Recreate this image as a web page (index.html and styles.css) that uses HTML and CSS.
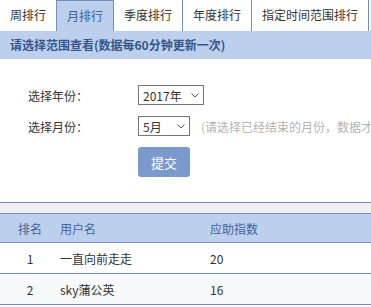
FILE: index.html
```html
<!DOCTYPE html>
<html>
<head>
    <title>排行</title>
    <link rel="stylesheet" href="styles.css">
</head>
<body>
    <ul class="tabs">
        <li>周排行</li>
        <li class="active">月排行</li>
        <li>季度排行</li>
        <li>年度排行</li>
        <li>指定时间范围排行</li>
    </ul>
    <div class="tip">请选择范围查看(数据每60分钟更新一次)</div>

    <form class="rangeform">
        <div class="row">
            <label>选择年份：</label>
            <span class="selbox sel-year">
                <select>
                    <option>2017年</option>
                    <option>2016年</option>
                </select>
                <svg class="arrow" width="8" height="5" viewBox="0 0 8 5"><path d="M0.5 0.5 L4 4 L7.5 0.5" fill="none" stroke="#555" stroke-width="1"/></svg>
            </span>
        </div>
        <div class="row">
            <label>选择月份：</label>
            <span class="selbox sel-month">
                <select>
                    <option>5月</option>
                    <option>4月</option>
                </select>
                <svg class="arrow" width="8" height="5" viewBox="0 0 8 5"><path d="M0.5 0.5 L4 4 L7.5 0.5" fill="none" stroke="#555" stroke-width="1"/></svg>
            </span>
            <span class="hint">(请选择已经结束的月份，数据才会完整)</span>
        </div>
        <div class="row">
            <label></label>
            <button type="button" class="btn">提交</button>
        </div>
    </form>

    <div class="toolbar"></div>
    <table class="rank">
        <tr>
            <th class="c1">排名</th>
            <th class="c2">用户名</th>
            <th>应助指数</th>
        </tr>
        <tr>
            <td class="c1">1</td>
            <td class="c2">一直向前走走</td>
            <td>20</td>
        </tr>
        <tr class="alt">
            <td class="c1">2</td>
            <td class="c2">sky蒲公英</td>
            <td>16</td>
        </tr>
    </table>
</body>
</html>
```

FILE: styles.css
```css
body{
    margin: 0;
    font-family: "Microsoft YaHei", "Noto Sans CJK SC", sans-serif;
    font-size: 12px;
    color: #333;
    overflow: hidden;
}
.tabs{
    display: flex;
    list-style: none;
    margin: 0;
    padding: 0;
    height: 31px;
}
.tabs li{
    flex-shrink: 0;
    height: 31px;
    line-height: 30px;
    padding: 0 10px;
    border-right: 1px solid #6f8fbd;
    box-sizing: border-box;
    white-space: nowrap;
}
.tabs li.active{
    background: #bccfec;
    border-top: 1px solid #6f8fbd;
    color: #3f5f94;
}
.tip{
    background: #bccfec;
    height: 28px;
    line-height: 28px;
    padding-left: 10px;
    font-weight: bold;
    color: #36558a;
}
.rangeform{
    padding: 26px 0 25px 28px;
}
.row{
    display: flex;
    align-items: center;
    height: 20px;
    margin-bottom: 11px;
    white-space: nowrap;
}
.row:last-child{
    height: 30px;
    margin-bottom: 0;
}
.row label{
    width: 110px;
    flex-shrink: 0;
}
.selbox{
    position: relative;
    flex-shrink: 0;
    height: 20px;
}
.selbox select{
    -webkit-appearance: none;
    appearance: none;
    width: 100%;
    height: 20px;
    font-family: inherit;
    font-size: 12px;
    color: #333;
    border: 1px solid #767676;
    border-radius: 0;
    background: #fff;
    padding: 0 0 0 4px;
    box-sizing: border-box;
    outline: none;
}
.selbox .arrow{
    position: absolute;
    right: 5px;
    top: 8px;
    pointer-events: none;
}
.sel-year{
    width: 66px;
}
.sel-month{
    width: 52px;
}
.hint{
    flex-shrink: 0;
    margin-left: 11px;
    color: #b4b4b4;
}
.btn{
    width: 52px;
    height: 30px;
    border: none;
    border-radius: 3px;
    background: #7c99cd;
    color: #fff;
    font-family: inherit;
    font-size: 13px;
}
.toolbar{
    height: 10px;
    background: #f0f0f0;
    border-top: 1px solid #6f8fbd;
}
.rank{
    width: 100%;
    border-collapse: collapse;
}
.rank th, .rank td{
    text-align: left;
    padding: 0;
    border-top: 1px solid #6f8fbd;
    border-bottom: 1px solid #6f8fbd;
}
.rank th{
    height: 28px;
    background: #bccfec;
    font-weight: normal;
    color: #42649a;
}
.rank td{
    height: 30px;
}
.rank .alt td{
    background: #f8f9fb;
}
.rank .c1{
    width: 60px;
    text-align: center;
}
.rank .c2{
    width: 150px;
}
```
